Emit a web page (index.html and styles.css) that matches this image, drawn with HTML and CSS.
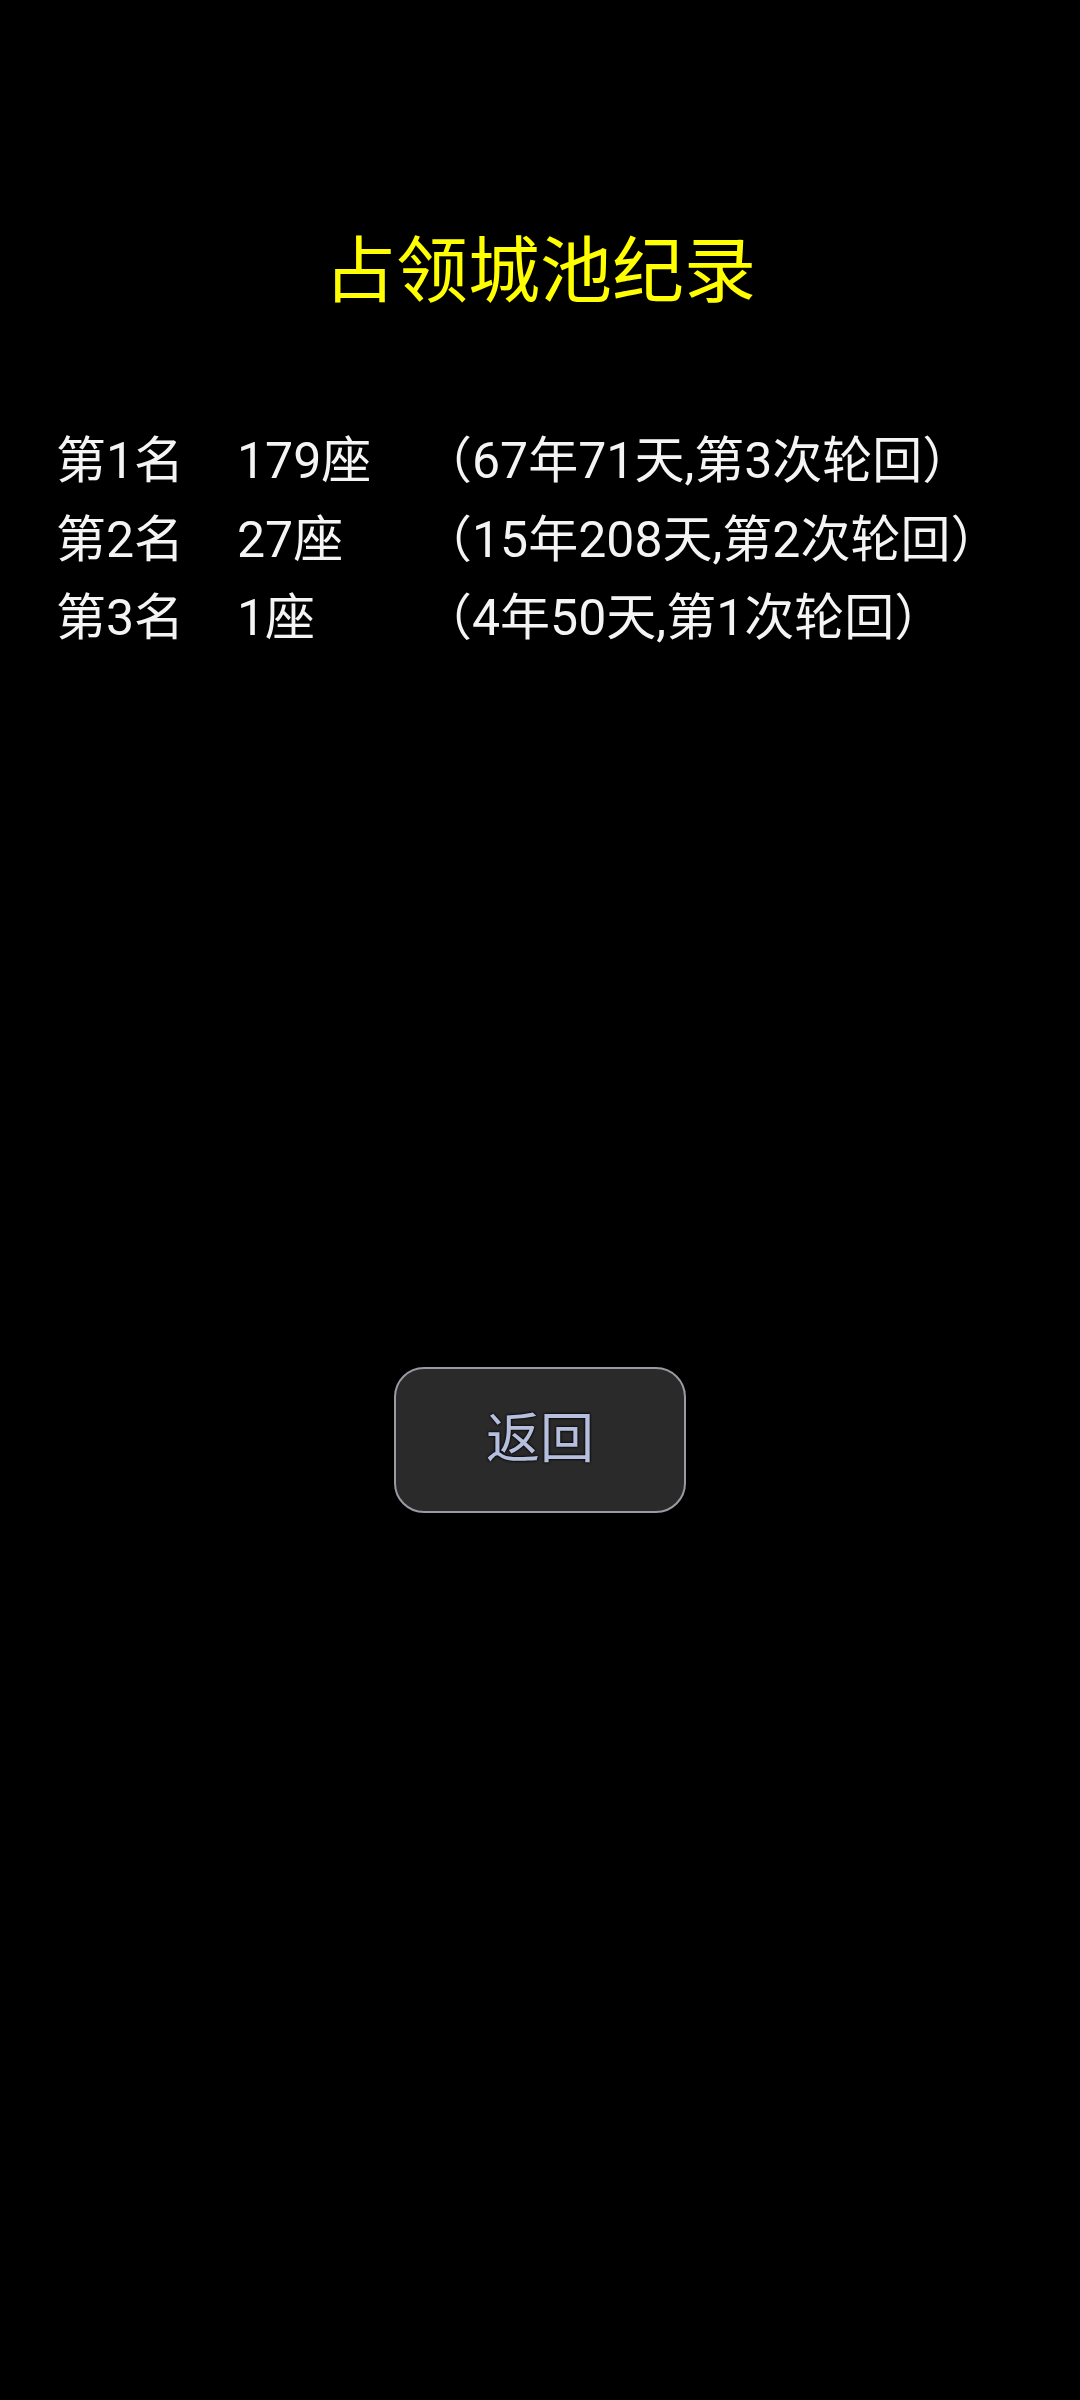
FILE: index.html
```html
<!DOCTYPE html>
<html lang="zh-CN">
<head>
<meta charset="utf-8">
<title>占领城池纪录</title>
<link rel="stylesheet" href="styles.css">
</head>
<body>
<main class="page">
  <h1 class="title">占领城池纪录</h1>
  <div class="records">
    <div class="row"><span class="rank">第1名</span><span class="count">179座</span><span class="detail">（67年71天,第3次轮回）</span></div>
    <div class="row"><span class="rank">第2名</span><span class="count">27座</span><span class="detail">（15年208天,第2次轮回）</span></div>
    <div class="row"><span class="rank">第3名</span><span class="count">1座</span><span class="detail">（4年50天,第1次轮回）</span></div>
  </div>
  <div class="actions">
    <button class="back" type="button">返回</button>
  </div>
</main>
</body>
</html>
```

FILE: styles.css
```css
html, body {
  margin: 0;
  padding: 0;
  background: #000;
}
body {
  width: 1080px;
  min-height: 2400px;
  font-family: Roboto, "Noto Sans CJK SC", sans-serif;
  color: #fff;
}
.page {
  display: flex;
  flex-direction: column;
  padding-top: 236px;
}
.title {
  margin: 0;
  font-size: 72px;
  line-height: 72px;
  font-weight: 400;
  color: #ffff00;
  text-align: center;
}
.records {
  margin-top: 114px;
  padding-left: 56px;
  display: flex;
  flex-direction: column;
}
.row {
  display: grid;
  grid-template-columns: 181px 185px auto;
  font-size: 50px;
  line-height: 78.5px;
  color: #f4f4f4;
  white-space: nowrap;
}
.actions {
  margin-top: 709px;
  display: flex;
  justify-content: center;
}
.back {
  width: 292px;
  height: 146px;
  box-sizing: border-box;
  border: 2px solid #9a9aa2;
  border-radius: 30px;
  background: #2a2a2a;
  color: #b6c0de;
  font-family: Roboto, "Noto Sans CJK SC", sans-serif;
  font-size: 54px;
  line-height: 1;
  padding: 0;
  text-shadow: 0 0 2px #000, 0 0 3px #000;
}
```
